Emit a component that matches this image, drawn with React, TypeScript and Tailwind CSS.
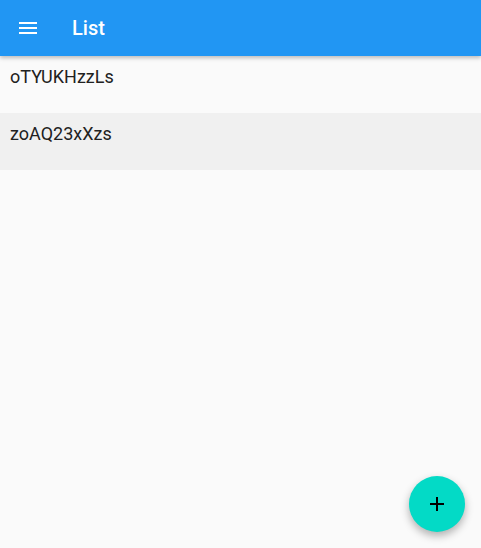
import React from "react";

const items = ["oTYUKHzzLs", "zoAQ23xXzs"];

export default function App() {
  return (
    <div className="relative h-[548px] w-[481px] overflow-hidden bg-[#fafafa] font-['Roboto',sans-serif]">
      <header className="relative z-10 flex h-[56px] items-center bg-[#2196f3] shadow-[0_2px_4px_rgba(0,0,0,0.25)]">
        <button className="flex h-[56px] w-[56px] items-center justify-center" type="button">
          <svg width="24" height="24" viewBox="0 0 24 24" fill="#ffffff">
            <path d="M3 18h18v-2H3v2zm0-5h18v-2H3v2zm0-7v2h18V6H3z" />
          </svg>
        </button>
        <h1 className="ml-[16px] text-[20px] font-medium text-white">List</h1>
      </header>
      <div className="flex flex-col">
        {items.map((item, i) => (
          <div
            key={item}
            className={`h-[57px] px-[10px] pt-[8px] text-[18px] leading-[26px] text-[#212121] ${i % 2 === 1 ? "bg-[#f0f0f0]" : ""}`}
          >
            {item}
          </div>
        ))}
      </div>
      <button
        className="absolute bottom-[16px] right-[16px] flex h-[56px] w-[56px] items-center justify-center rounded-full bg-[#03dac6] shadow-[0_4px_8px_rgba(0,0,0,0.3)]"
        type="button"
      >
        <svg width="24" height="24" viewBox="0 0 24 24" fill="#000000">
          <path d="M19 13h-6v6h-2v-6H5v-2h6V5h2v6h6v2z" />
        </svg>
      </button>
    </div>
  );
}
